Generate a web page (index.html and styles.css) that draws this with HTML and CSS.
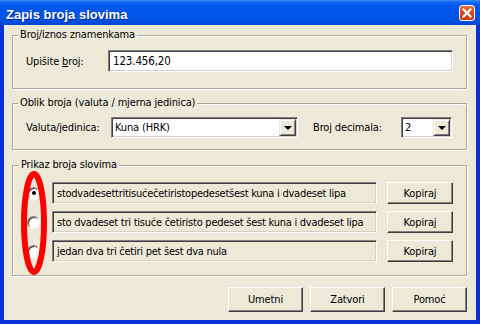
FILE: index.html
```html
<!DOCTYPE html>
<html lang="hr">
<head>
  <meta charset="UTF-8" />
  <title>Zapis broja slovima</title>
  <link rel="stylesheet" href="styles.css">
</head>
<body>
  <div class="window">
    <div class="titlebar">
      <span class="title">Zapis broja slovima</span>
      <span class="close-btn">
        <svg width="10" height="10" viewBox="0 0 10 10">
          <path d="M1.5 1.5 L8.5 8.5 M8.5 1.5 L1.5 8.5" stroke="#fff" stroke-width="2.2" stroke-linecap="square"/>
        </svg>
      </span>
    </div>

    <div class="client">
      <fieldset class="group group-number">
        <legend>Broj/iznos znamenkama</legend>
        <div class="row">
          <label class="lbl lbl-number" for="number">Upišite <u>b</u>roj:</label>
          <input class="edit" id="number" type="text" value="123.456,20">
        </div>
      </fieldset>

      <fieldset class="group group-format">
        <legend>Oblik broja (valuta / mjerna jedinica)</legend>
        <div class="row">
          <span class="lbl lbl-unit">Valuta/jedinica:</span>
          <div class="combo combo-unit">
            <span class="combo-value">Kuna (HRK)</span>
            <span class="combo-btn"><span class="arrow"></span></span>
          </div>
          <span class="lbl lbl-dec">Broj decimala:</span>
          <div class="combo combo-dec">
            <span class="combo-value">2</span>
            <span class="combo-btn"><span class="arrow"></span></span>
          </div>
        </div>
      </fieldset>

      <fieldset class="group group-words">
        <legend>Prikaz broja slovima</legend>
        <div class="choices">
          <div class="choice">
            <span class="radio checked"></span>
            <div class="text-field">stodvadesettritisućečetiristopedesetšest kuna i dvadeset lipa</div>
            <button class="btn btn-copy">Kopiraj</button>
          </div>
          <div class="choice">
            <span class="radio"></span>
            <div class="text-field">sto dvadeset tri tisuće četiristo pedeset šest kuna i dvadeset lipa</div>
            <button class="btn btn-copy">Kopiraj</button>
          </div>
          <div class="choice">
            <span class="radio"></span>
            <div class="text-field">jedan dva tri četiri pet šest dva nula</div>
            <button class="btn btn-copy">Kopiraj</button>
          </div>

          <svg class="mark" width="26" height="104" viewBox="0 0 26 104">
            <ellipse cx="13" cy="52" rx="10" ry="49" fill="none" stroke="#ff0000" stroke-width="6"/>
          </svg>
        </div>
      </fieldset>

      <div class="actions">
        <button class="btn btn-main">Umetni</button>
        <button class="btn btn-main">Zatvori</button>
        <button class="btn btn-main">Pomoć</button>
      </div>
    </div>
  </div>
</body>
</html>
```

FILE: styles.css
```css
* {
  box-sizing: border-box;
  margin: 0;
  padding: 0;
}

body {
  width: 480px;
  height: 324px;
  overflow: hidden;
  font-family: "DejaVu Sans Condensed", "Liberation Sans", sans-serif;
  font-size: 11px;
  letter-spacing: -0.15px;
  color: #000;
  background: #ece9d8;
}

.window {
  width: 480px;
  height: 324px;
  display: flex;
  flex-direction: column;
  background: #0831d9;
}

/* title bar */

.titlebar {
  height: 25px;
  flex-shrink: 0;
  display: flex;
  justify-content: space-between;
  align-items: flex-start;
  padding: 0 5px 0 6px;
  background: linear-gradient(to bottom, #3d8ef9 0, #1a6cf4 2px, #0058ee 5px, #0055e9 50%, #0052e2 80%, #0046d2 100%);
}

.title {
  padding-top: 7px;
  font-family: "Liberation Sans", sans-serif;
  font-weight: bold;
  font-size: 13px;
  line-height: 15px;
  letter-spacing: 0;
  color: #fff;
  text-shadow: 1px 1px 0 #0a2a9a;
}

.close-btn {
  margin-top: 5px;
  width: 16px;
  height: 16px;
  display: flex;
  align-items: center;
  justify-content: center;
  border: 1px solid #fff;
  border-radius: 3px;
  background: linear-gradient(to bottom, #e8704a 0, #d9481c 45%, #c63d12 100%);
}

/* client area */

.client {
  flex: 1;
  margin: 0 4px 4px;
  padding: 3px 9px 0 8px;
  background: #ece9d8;
  display: flex;
  flex-direction: column;
}

.group {
  min-width: 0;
  border: 1px solid #aca899;
  box-shadow: inset 1px 1px 0 #fff, 1px 1px 0 #fff;
}

.group legend {
  margin-left: -8px;
  padding: 0 2px;
  line-height: 14px;
  background: #ece9d8;
}

.group-number {
  padding: 8px 13px 16px 13px;
}

.group-format {
  margin-top: 7px;
  padding: 7px 14px 11px 13px;
}

.group-words {
  margin-top: 8px;
  padding: 10px 13px 13px 14px;
}

.row {
  display: flex;
  align-items: center;
}

.lbl-number {
  width: 82px;
}

.lbl-unit {
  width: 85px;
}

.lbl-dec {
  width: 88px;
  margin-left: 15px;
}

/* sunken controls */

.edit,
.combo,
.text-field {
  border: 1px solid;
  border-color: #808080 #fff #fff #808080;
  box-shadow: inset 1px 1px 0 #404040, inset -1px -1px 0 #d4d0c8;
}

.edit {
  flex: 1;
  height: 22px;
  padding: 0 4px;
  font-family: inherit;
  font-size: 11.5px;
  letter-spacing: inherit;
  color: #000;
  background: #fff;
  outline: none;
}

.combo {
  height: 21px;
  padding: 1px;
  display: flex;
  align-items: center;
  background: #fff;
}

.combo-unit {
  width: 187px;
}

.combo-dec {
  width: 51px;
}

.combo-value {
  flex: 1;
  padding-left: 2px;
}

.combo-btn {
  width: 17px;
  height: 17px;
  display: flex;
  align-items: center;
  justify-content: center;
  background: #ece9d8;
  border: 1px solid;
  border-color: #ece9d8 #404040 #404040 #ece9d8;
  box-shadow: inset 1px 1px 0 #fff, inset -1px -1px 0 #808080;
}

.arrow {
  width: 0;
  height: 0;
  border-left: 4px solid transparent;
  border-right: 4px solid transparent;
  border-top: 4px solid #000;
}

/* choices */

.choices {
  position: relative;
  display: flex;
  flex-direction: column;
  gap: 7px;
}

.choice {
  display: flex;
  align-items: center;
  height: 22px;
}

.radio {
  width: 13px;
  height: 13px;
  flex-shrink: 0;
  border-radius: 50%;
  border: 1px solid;
  border-color: #808080 #fff #fff #808080;
  background: #fff;
  box-shadow: inset 1px 1px 0 #404040;
  display: flex;
  align-items: center;
  justify-content: center;
}

.radio.checked::after {
  content: "";
  width: 4px;
  height: 4px;
  border-radius: 50%;
  background: #000;
}

.text-field {
  width: 325px;
  height: 22px;
  margin-left: 12px;
  padding-left: 4px;
  display: flex;
  align-items: center;
  white-space: nowrap;
  overflow: hidden;
  letter-spacing: -0.25px;
  background: #ece9d8;
}

.mark {
  position: absolute;
  left: -6px;
  top: -11px;
}

/* buttons */

.btn {
  font-family: inherit;
  font-size: 11px;
  letter-spacing: inherit;
  color: #000;
  background: #ece9d8;
  border: 1px solid;
  border-color: #fff #404040 #404040 #fff;
  box-shadow: inset -1px -1px 0 #808080;
  cursor: pointer;
}

.btn-copy {
  width: 66px;
  height: 22px;
  margin-left: 10px;
}

.actions {
  margin-top: 11px;
  display: flex;
  justify-content: flex-end;
  gap: 7px;
}

.btn-main {
  width: 75px;
  height: 25px;
}
```
